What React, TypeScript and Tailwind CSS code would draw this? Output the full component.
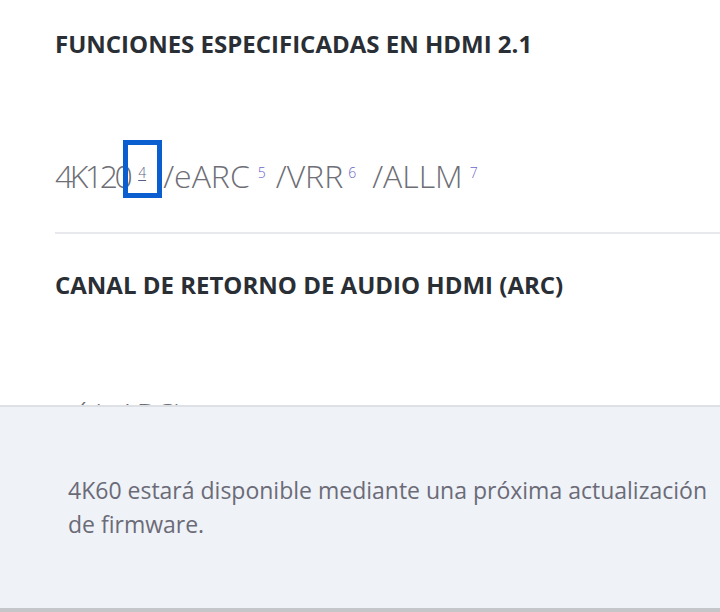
import React from "react";

const Sup = ({ n, className = "" }: { n: string; className?: string }) => (
  <span className={`relative -top-[10px] text-[14px] text-[#6b67c9] ${className}`}>{n}</span>
);

export default function App() {
  return (
    <div className="relative w-[720px] h-[612px] overflow-hidden bg-white" style={{ fontFamily: '"Open Sans", "Noto Sans", sans-serif' }}>
      <div className="flex flex-col pl-[55px] pt-[28px]">
        <h2 className="text-[24px] leading-[32px] font-bold text-[#2a2e35] whitespace-nowrap">
          FUNCIONES ESPECIFICADAS EN HDMI 2.1
        </h2>
        <div className="mt-[96px] text-[32px] leading-[40px] font-light text-[#6e6e76] whitespace-nowrap">
          <span className="tracking-[-3.5px]">4K120</span>
          <span className="relative ml-[9px] mr-[17px] text-[14px] text-[#5a5f8a] underline underline-offset-2 -top-[10px]">
            4
            <span className="absolute left-[-15px] top-[-23px] w-[39px] h-[58px] border-[5px] border-[#0b5ed0]" />
          </span>
          <span>/eARC</span>
          <Sup n="5" className="ml-[8px] mr-[10px]" />
          <span>/VRR</span>
          <Sup n="6" className="ml-[5px] mr-[16px]" />
          <span>/ALLM</span>
          <Sup n="7" className="ml-[7px]" />
        </div>
        <div className="mt-[29px] h-[2px] bg-[#e8e9ec]" />
        <h2 className="mt-[35px] text-[24px] leading-[32px] font-bold text-[#2a2e35] whitespace-nowrap">
          CANAL DE RETORNO DE AUDIO HDMI (ARC)
        </h2>
        <div className="mt-[93px] pl-[8px] text-[31px] leading-[40px] font-light text-[#6e6e76]">sí (eARC)</div>
      </div>

      <div className="absolute left-0 right-0 top-[405px] bottom-0 bg-[#eff2f7] border-t-2 border-[#dde0e5] border-b-4 border-b-[#c4c6c9]">
        <p className="pl-[68px] pr-[12px] pt-[66px] text-[23px] leading-[34px] text-[#6b6b78]">
          4K60 estará disponible mediante una próxima actualización de firmware.
        </p>
      </div>
    </div>
  );
}
